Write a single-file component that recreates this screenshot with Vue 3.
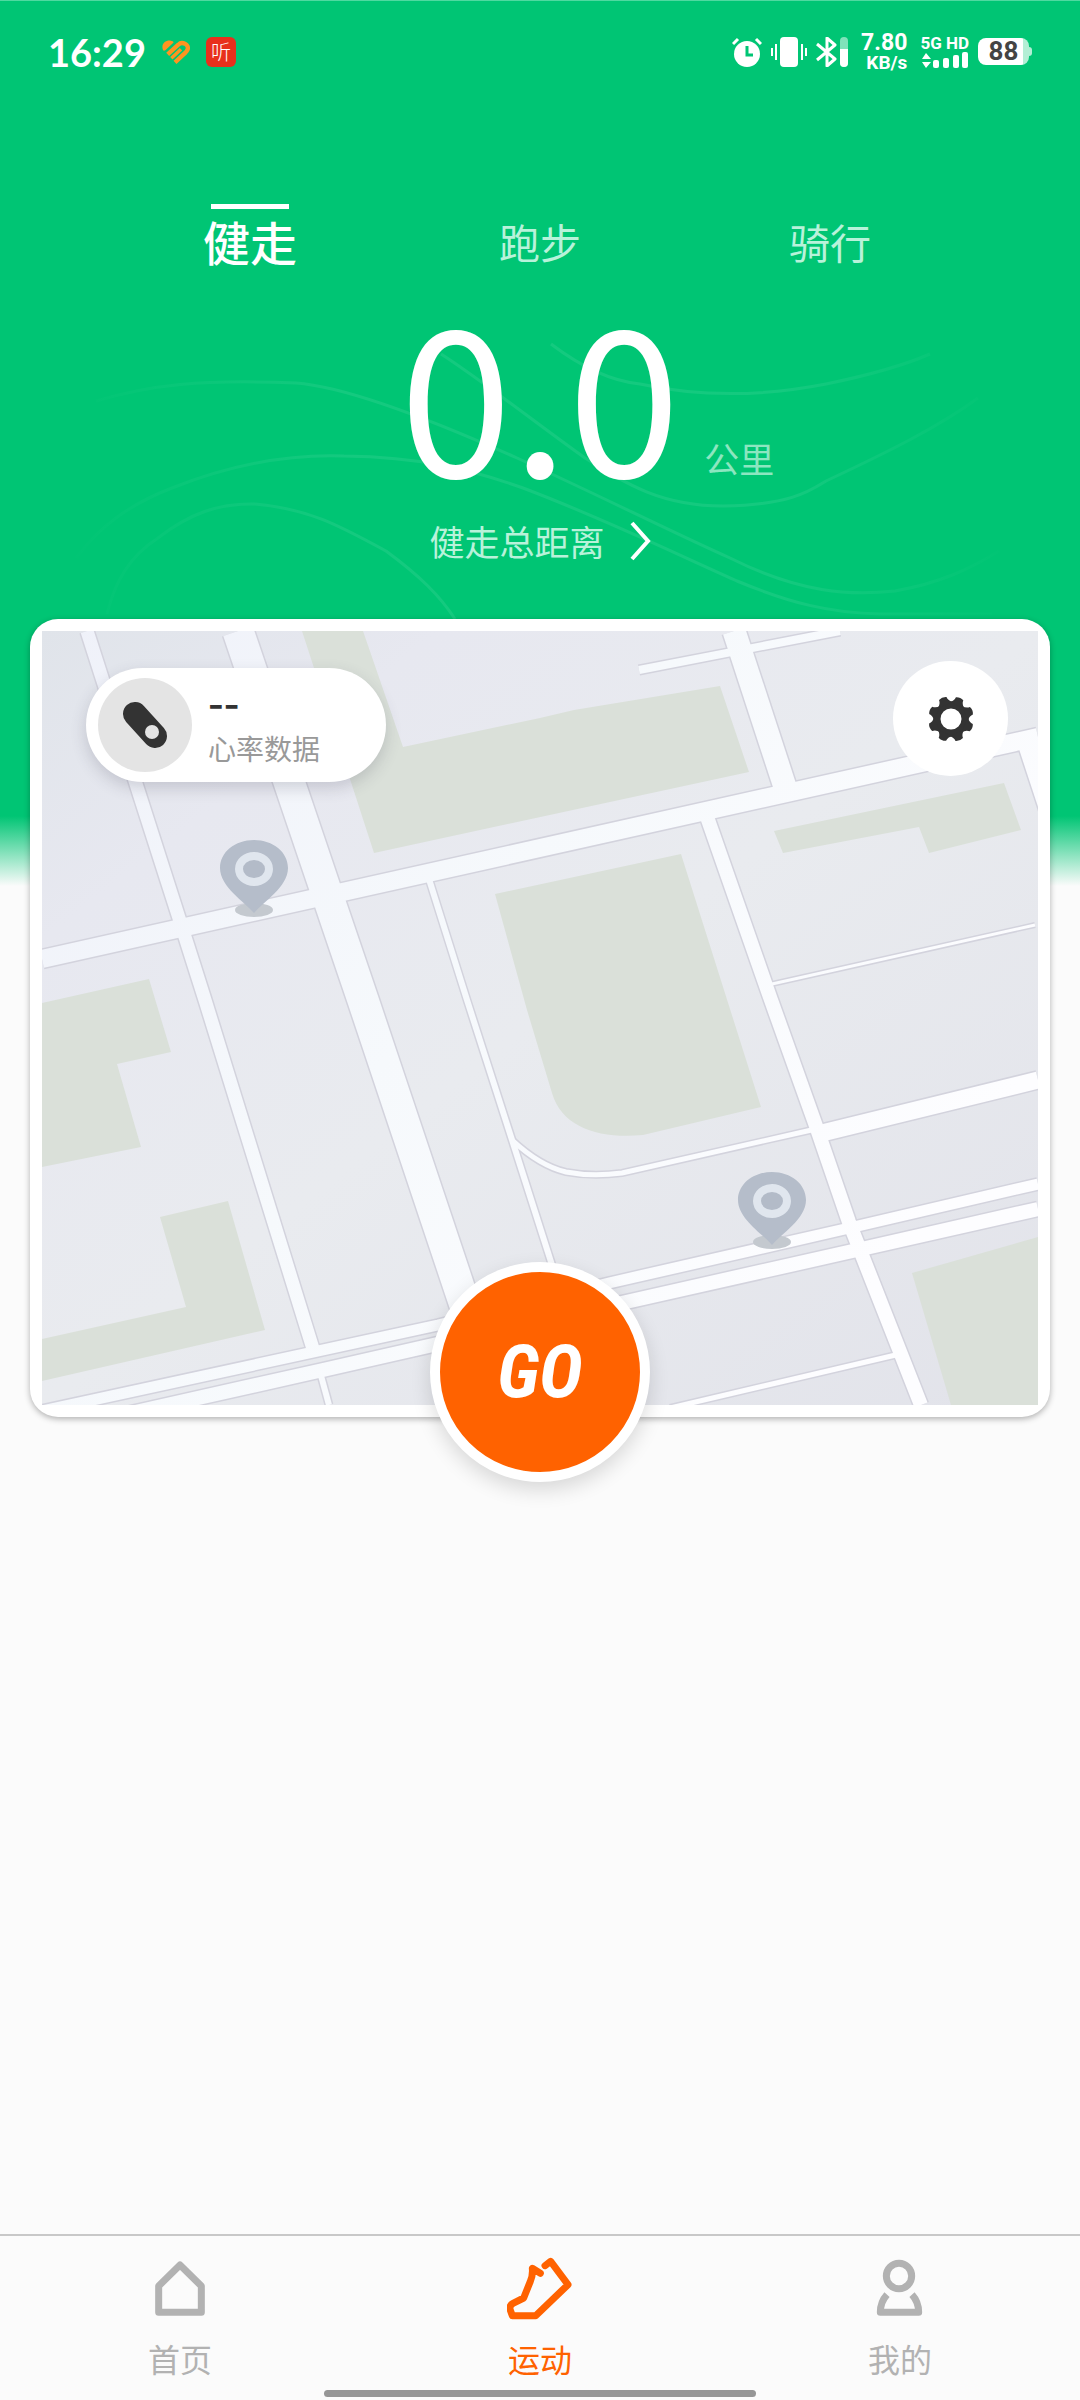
<template>
  <div class="screen">
    <svg class="waves" viewBox="0 0 1080 620" fill="none" aria-hidden="true">
      <defs>
        <linearGradient id="wave" gradientUnits="userSpaceOnUse" x1="60" y1="0" x2="1020" y2="0">
          <stop offset="0" stop-color="#fff" stop-opacity="0" />
          <stop offset="0.3" stop-color="#fff" stop-opacity="0.08" />
          <stop offset="0.75" stop-color="#fff" stop-opacity="0.08" />
          <stop offset="1" stop-color="#fff" stop-opacity="0" />
        </linearGradient>
      </defs>
      <g stroke="url(#wave)" stroke-width="3">
        <path d="M96 400C150 384 200 378 296 382C350 386 450 427 517 457C590 490 680 535 730 557C800 592 850 595 895 590C940 582 970 568 999 550" />
        <path d="M76 557C100 525 130 503 172 487C230 464 290 453 344 455C420 456 470 468 523 487C600 516 670 550 737 580C790 602 830 612 880 613H992" />
        <path d="M107 613C115 580 130 555 158 537C190 512 220 502 255 503C310 508 340 525 386 550C420 575 440 595 455 618" />
        <path d="M441 353C480 378 540 425 585 457C625 482 660 505 723 505C790 504 810 490 826 480C890 450 940 425 978 397" />
        <path d="M551 343C580 365 610 380 640 383C700 396 760 396 826 383C865 375 900 366 930 353" />
      </g>
    </svg>

    <header class="status-bar">
      <div class="status-left">
        <span class="clock">16:29</span>
        <svg class="heart" viewBox="0 0 84 72" aria-hidden="true">
          <g fill="none" stroke="#ff9420">
            <path d="M3 30C-4 12 10 0 26 2C32 3 36 5 34 8L10 31Q5 34 3 30Z" fill="#ff9420" stroke="none" />
            <path d="M17 43L49 14C60 3 84 14 76 30Q74 34 71 37L39 67" stroke-width="13" />
            <path d="M28 55L57 28" stroke-width="10" />
          </g>
        </svg>
        <span class="app-badge">听</span>
      </div>
      <div class="status-right">
        <svg width="30" height="30" viewBox="0 0 30 30" aria-hidden="true">
          <circle cx="15" cy="17" r="13" fill="#fff" />
          <path d="M1 7L6 2M29 7L24 2" stroke="#fff" stroke-width="3" />
          <path d="M15 9V18H21" fill="none" stroke="#00c574" stroke-width="3" />
        </svg>
        <svg width="36" height="30" viewBox="0 0 36 30" aria-hidden="true">
          <rect x="9" width="18" height="30" rx="4" fill="#fff" />
          <path d="M1 11V19M5 7V23M31 7V23M35 11V19" stroke="#fff" stroke-width="2" />
        </svg>
        <svg width="32" height="30" viewBox="0 0 32 30" aria-hidden="true">
          <path d="M1 7L19 22L11 29V1L19 8L1 23" fill="none" stroke="#fff" stroke-width="3" stroke-linejoin="round" />
          <rect x="24" width="8" height="30" rx="4" fill="#fff" opacity="0.5" />
          <path d="M24 12H32V26A4 4 0 0 1 24 26Z" fill="#fff" />
        </svg>
        <div class="speed">
          <span>7.80</span>
          <small>KB/s</small>
        </div>
        <div class="network">
          <span>5G HD</span>
          <svg width="48" height="17" viewBox="0 0 48 17" fill="#fff" aria-hidden="true">
            <path d="M1 7L5 1L10 7ZM1 10H10L5 16Z" />
            <rect x="12" y="8" width="6" height="8" rx="2" />
            <rect x="22" y="6" width="6" height="10" rx="2" />
            <rect x="32" y="3" width="6" height="13" rx="2" />
            <rect x="41" y="0" width="6" height="16" rx="2" />
          </svg>
        </div>
        <div class="battery">88</div>
      </div>
    </header>

    <nav class="sports">
      <button
        v-for="sport in sports"
        :key="sport"
        type="button"
        :class="{ active: sport === currentSport }"
        @click="currentSport = sport"
      >
        {{ sport }}
      </button>
    </nav>

    <section class="summary">
      <div class="distance">
        <strong>0.0</strong>
        <span>公里</span>
      </div>
      <a href="#" class="total" @click.prevent>
        {{ currentSport }}总距离
        <svg width="22" height="40" viewBox="0 0 22 40" aria-hidden="true">
          <path d="M3 2L19 20L3 38" fill="none" stroke="#fff" stroke-width="4" />
        </svg>
      </a>
    </section>

    <main class="map-card">
      <svg class="map" viewBox="42 631 996 774" aria-hidden="true">
        <defs>
          <linearGradient id="land" x1="0" y1="0" x2="1" y2="1">
            <stop offset="0" stop-color="#e0e4ea" />
            <stop offset="0.2" stop-color="#e7e8f0" />
            <stop offset="0.5" stop-color="#e9ebef" />
            <stop offset="1" stop-color="#e2e3ea" />
          </linearGradient>
          <linearGradient id="road" gradientUnits="userSpaceOnUse" x1="42" y1="631" x2="900" y2="1250">
            <stop offset="0" stop-color="#eff1f9" />
            <stop offset="0.5" stop-color="#f6f9fc" />
            <stop offset="1" stop-color="#fdfdff" />
          </linearGradient>
        </defs>
        <rect x="42" y="631" width="996" height="774" fill="url(#land)" />
        <g fill="#dae0d9">
          <path d="M302 631H363L403 747L540 718L574 710L720 686L749 772L374 853Z" />
          <path d="M774 831L1004 783L1021 830L929 853L919 827L783 853Z" />
          <path d="M495 894L681 854L761 1107L643 1135C600 1139 562 1128 552 1093L527 1010Z" />
          <path d="M42 1003L149 979L171 1052L117 1064L141 1147L42 1167Z" />
          <path d="M160 1217L228 1201L265 1330L42 1381V1339L186 1307Z" />
          <path d="M912 1273L1038 1237V1405H951Z" />
        </g>
        <g fill="none" stroke="#d3d3dd">
          <path v-for="road in roads" :key="road.d" :d="road.d" :stroke-width="road.width + 2" />
        </g>
        <g fill="none" stroke="url(#road)">
          <path v-for="road in roads" :key="road.d" :d="road.d" :stroke-width="road.width - 1" />
        </g>
        <g v-for="pin in pins" :key="pin.x" :transform="`translate(${pin.x} ${pin.y})`">
          <ellipse cy="-3" rx="19" ry="7" fill="#c4c9cf" />
          <path d="M0 0C-9 -11 -34 -26 -34 -45C-34 -61 -19 -73 0 -73C19 -73 34 -61 34 -45C34 -26 9 -11 0 0Z" fill="#b5bdca" />
          <ellipse cy="-44" rx="15" ry="13" fill="#b3bbc8" stroke="#e0e6ee" stroke-width="8" />
        </g>
      </svg>

      <button type="button" class="heart-rate">
        <span class="sensor">
          <svg width="46" height="46" viewBox="0 0 46 46" aria-hidden="true">
            <path d="M13 12L33 34" stroke="#333" stroke-width="24" stroke-linecap="round" />
            <circle cx="30" cy="30" r="7" fill="#e4e4e4" />
          </svg>
        </span>
        <span class="rate-text">
          <b>--</b>
          <span>心率数据</span>
        </span>
      </button>

      <button type="button" class="settings" aria-label="设置">
        <svg width="46" height="46" viewBox="-23 -23 46 46" aria-hidden="true">
          <circle r="14" fill="none" stroke="#333" stroke-width="7" />
          <path
            v-for="n in 8"
            :key="n"
            d="M-8 -15Q-4 -18 -4 -22Q0 -24 4 -22Q4 -18 8 -15Z"
            :transform="`rotate(${n * 45 - 22})`"
            fill="#333"
          />
        </svg>
      </button>

      <button type="button" class="go">GO</button>
    </main>

    <footer class="tab-bar">
      <a href="#">
        <svg viewBox="0 0 198 198" aria-hidden="true">
          <path d="M99 27L163 90V169H35V90Z" />
        </svg>
        首页
      </a>
      <a href="#" class="active">
        <svg viewBox="0 0 198 198" aria-hidden="true">
          <path d="M100 52L76 37Q78 58 70 76L50 126L18 142Q7 148 9 160L16 179H86L183 86L131 16L114 29" stroke-linecap="round" />
        </svg>
        运动
      </a>
      <a href="#">
        <svg viewBox="0 0 198 198" aria-hidden="true">
          <circle cx="96" cy="60" r="38" />
          <path d="M60 116Q40 138 40 169H155Q155 138 135 116" />
        </svg>
        我的
      </a>
    </footer>
  </div>
</template>

<script setup>
import { ref } from 'vue';

const sports = ['健走', '跑步', '骑行'];
const currentSport = ref('健走');

const roads = [
  { d: 'M87 631L179 918L205 1000L314 1352', width: 14 },
  { d: 'M238 631L325 888L363 1000L472 1326', width: 32 },
  { d: 'M42 959L1038 737', width: 19 },
  { d: 'M734 631L786 790', width: 24 },
  { d: 'M706 814L771 1000L816 1126L849 1222L921 1405', width: 15 },
  { d: 'M639 670L840 631', width: 9 },
  { d: 'M1034 745L1064 836', width: 32 },
  { d: 'M772 984L1035 925', width: 4 },
  { d: 'M428 876L467 1000L513 1143L568 1315', width: 7 },
  { d: 'M512 1140Q540 1166 566 1172Q592 1177 622 1173L816 1129', width: 6 },
  { d: 'M822 1133L1038 1080', width: 18 },
  { d: 'M42 1411L438 1325L609 1283L845 1229L1038 1184', width: 12 },
  { d: 'M42 1433L323 1370L433 1345L626 1302L857 1250L1038 1209', width: 15 },
  { d: 'M320 1372L329 1405', width: 7 },
  { d: 'M900 1354L670 1408', width: 6 }
];

const pins = [
  { x: 254, y: 913 },
  { x: 772, y: 1245 }
];
</script>

<style>
body {
  background: #fbfbfb;
}
</style>

<style scoped>
.screen {
  position: relative;
  display: flex;
  flex-direction: column;
  box-sizing: border-box;
  min-height: 100vh;
  border-top: 1px solid #4fd9a0;
  background: linear-gradient(#00c574 815px, #fbfbfb 885px);
  font-family: "Noto Sans CJK SC", sans-serif;
  color: #fff;
}

button {
  padding: 0;
  border: none;
  background: none;
  color: inherit;
  font-family: inherit;
  cursor: pointer;
}

a {
  color: inherit;
  text-decoration: none;
}

.waves {
  position: absolute;
  top: 0;
  left: 0;
  width: 100%;
}

.status-bar {
  position: relative;
  display: flex;
  align-items: center;
  justify-content: space-between;
  height: 101px;
  padding: 0 48px;
}

.status-left,
.status-right {
  display: flex;
  align-items: center;
}

.status-left {
  gap: 16px;
}

.status-right {
  gap: 9px;
}

.clock {
  font: bold 38px/40px Lato, sans-serif;
}

.heart {
  width: 28px;
  height: 24px;
}

.app-badge {
  width: 30px;
  height: 30px;
  border-radius: 6px;
  background: #e8301c;
  font-size: 20px;
  font-weight: 300;
  line-height: 30px;
  text-align: center;
}

.speed,
.network {
  display: flex;
  flex-direction: column;
  align-items: flex-end;
  margin-left: 4px;
}

.speed {
  font: bold 23px/22px Roboto, sans-serif;
}

.speed small {
  font-size: 19px;
  line-height: 18px;
}

.network {
  font: bold 17px/18px Roboto, sans-serif;
}

.battery {
  position: relative;
  width: 51px;
  height: 27px;
  margin-right: 3px;
  border-radius: 8px;
  background: linear-gradient(90deg, #fff 45px, #b3eed5 45px);
  color: #444;
  font: bold 26px/27px Roboto, sans-serif;
  text-align: center;
}

.battery::after {
  content: "";
  position: absolute;
  top: 9px;
  right: -3px;
  width: 3px;
  height: 9px;
  border-radius: 0 3px 3px 0;
  background: #b3eed5;
}

.sports {
  position: relative;
  display: grid;
  grid-template-columns: repeat(3, 1fr);
  margin-top: 102px;
  padding: 0 105px;
}

.sports button {
  display: flex;
  flex-direction: column;
  align-items: center;
  color: #b8f2da;
  font-size: 41px;
  line-height: 60px;
}

.sports button::before {
  content: "";
  width: 78px;
  height: 5px;
  margin-bottom: 2px;
}

.sports .active {
  color: #fff;
  font-size: 47px;
  font-weight: 500;
}

.sports .active::before {
  background: #fff;
}

.summary {
  position: relative;
  display: flex;
  flex-direction: column;
  align-items: center;
  gap: 48px;
  margin-top: 38px;
}

.distance {
  display: grid;
  grid-template-columns: 1fr auto 1fr;
  align-items: end;
  width: 100%;
}

.distance strong {
  grid-column: 2;
  font-size: 202px;
  font-weight: 400;
  line-height: 160px;
}

.distance span {
  padding-left: 24px;
  color: #8ce6c0;
  font-size: 35px;
  line-height: 22px;
}

.total {
  display: flex;
  align-items: center;
  gap: 24px;
  color: #b8f2da;
  font-size: 35px;
  line-height: 48px;
}

.map-card {
  position: relative;
  margin: 54px 30px 0;
  padding: 12px;
  border-radius: 28px;
  background: #fff;
  box-shadow: 0 2px 6px rgba(0, 0, 0, 0.3);
}

.map {
  display: block;
  width: 100%;
}

.heart-rate {
  position: absolute;
  top: 49px;
  left: 56px;
  display: flex;
  align-items: center;
  gap: 16px;
  width: 300px;
  height: 114px;
  padding: 0 12px;
  border-radius: 57px;
  background: #fff;
  box-shadow: 0 6px 16px rgba(60, 60, 80, 0.2);
}

.sensor {
  display: flex;
  align-items: center;
  justify-content: center;
  width: 94px;
  height: 94px;
  border-radius: 50%;
  background: #e4e4e4;
}

.rate-text {
  display: flex;
  flex-direction: column;
  gap: 10px;
  color: #999;
  font-size: 28px;
  line-height: 40px;
  text-align: left;
}

.rate-text b {
  color: #333;
  font-size: 44px;
  font-weight: 500;
  line-height: 36px;
}

.settings {
  position: absolute;
  top: 42px;
  right: 42px;
  display: flex;
  align-items: center;
  justify-content: center;
  width: 115px;
  height: 115px;
  border-radius: 50%;
  background: #fff;
}

.go {
  position: absolute;
  bottom: -65px;
  left: 50%;
  width: 220px;
  height: 220px;
  border: 10px solid #fff;
  border-radius: 50%;
  background: #ff6200;
  box-shadow: 0 8px 20px rgba(0, 0, 0, 0.14);
  transform: translateX(-50%);
  font: italic bold 74px/80px "Roboto Condensed", Roboto, sans-serif;
}

.tab-bar {
  position: relative;
  display: grid;
  grid-template-columns: repeat(3, 1fr);
  box-sizing: border-box;
  height: 166px;
  margin-top: auto;
  padding-top: 20px;
  border-top: 2px solid #c8c8c8;
}

.tab-bar::after {
  content: "";
  position: absolute;
  bottom: 3px;
  left: 30%;
  width: 40%;
  height: 7px;
  border-radius: 4px;
  background: #969696;
}

.tab-bar a {
  display: flex;
  flex-direction: column;
  align-items: center;
  gap: 14px;
  color: #b2b2b2;
  font-size: 32px;
  line-height: 44px;
}

.tab-bar svg {
  width: 66px;
  height: 66px;
  fill: none;
  stroke: currentColor;
  stroke-width: 21;
  stroke-linejoin: round;
}

.tab-bar .active {
  color: #ff6200;
}
</style>
